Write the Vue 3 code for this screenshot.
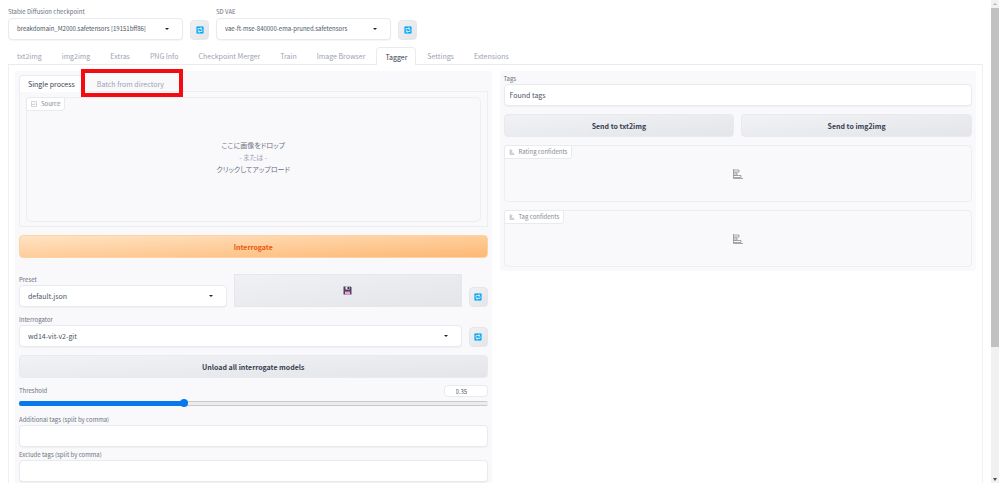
<script setup>
import { ref } from 'vue'

const mainTabs = ['txt2img', 'img2img', 'Extras', 'PNG Info', 'Checkpoint Merger', 'Train', 'Image Browser', 'Tagger', 'Settings', 'Extensions']
const activeTab = ref('Tagger')
const inputTab = ref('single')
const threshold = ref(0.35)
const plots = ['Rating confidents', 'Tag confidents']
</script>

<template>
  <div class="page">
    <main class="content">
      <header class="quick">
        <div class="field quick-field">
          <label for="checkpoint">Stable Diffusion checkpoint</label>
          <div class="select">
            <select id="checkpoint"><option>breakdomain_M2000.safetensors [19151bff86]</option></select>
            <svg class="caret" viewBox="0 0 4 2"><path d="M0 0h4L2 2z" /></svg>
          </div>
        </div>
        <button class="refresh" aria-label="Refresh checkpoints">
          <svg viewBox="0 0 16 16"><rect width="16" height="16" rx="2" fill="#12a5ee" /><path d="M4 9V5h7M9 3l3 2-3 2M12 7v4H5M7 9l-3 2 3 2" /></svg>
        </button>
        <div class="field quick-field">
          <label for="vae">SD VAE</label>
          <div class="select">
            <select id="vae"><option>vae-ft-mse-840000-ema-pruned.safetensors</option></select>
            <svg class="caret" viewBox="0 0 4 2"><path d="M0 0h4L2 2z" /></svg>
          </div>
        </div>
        <button class="refresh" aria-label="Refresh VAE">
          <svg viewBox="0 0 16 16"><rect width="16" height="16" rx="2" fill="#12a5ee" /><path d="M4 9V5h7M9 3l3 2-3 2M12 7v4H5M7 9l-3 2 3 2" /></svg>
        </button>
      </header>

      <nav class="tabs">
        <button v-for="t in mainTabs" :key="t" class="tab" :class="{ active: t === activeTab }" @click="activeTab = t">{{ t }}</button>
      </nav>

      <div class="workspace">
        <section class="panel">
          <div class="input-block">
            <div class="tabs">
              <button class="tab" :class="{ active: inputTab === 'single' }" @click="inputTab = 'single'">Single process</button>
              <button class="tab marked" :class="{ active: inputTab === 'batch' }" @click="inputTab = 'batch'">Batch from directory<span class="mark"></span></button>
            </div>
            <div class="tab-body">
              <div class="drop">
                <span class="tag source">
                  <svg viewBox="0 0 12 12"><path d="M1 1h10v10H1zM1 9l3-3 2 2 2-3 3 3M4 3v1" /></svg>
                  Source
                </span>
                <button class="drop-text">
                  <span>ここに画像をドロップ</span>
                  <span class="or">- または -</span>
                  <span>クリックしてアップロード</span>
                </button>
              </div>
            </div>
          </div>

          <button class="btn primary">Interrogate</button>

          <div class="row preset-row">
            <div class="field preset">
              <label for="preset">Preset</label>
              <div class="select">
                <select id="preset"><option>default.json</option></select>
                <svg class="caret" viewBox="0 0 4 2"><path d="M0 0h4L2 2z" /></svg>
              </div>
            </div>
            <button class="save" aria-label="Save preset">
              <svg viewBox="0 0 18 18"><path d="M1 1h14l2 2v14H1z" fill="#51435d" /><path d="M5 1h8v6H5z" fill="#e9e5f1" /><path d="M9 2h3v4H9z" fill="#3b3149" /><path d="M4 10h10v7H4z" fill="#e8a5d8" /><path d="M4 10h10v2H4z" fill="#a85a9b" /></svg>
            </button>
            <button class="refresh" aria-label="Refresh presets">
              <svg viewBox="0 0 16 16"><rect width="16" height="16" rx="2" fill="#12a5ee" /><path d="M4 9V5h7M9 3l3 2-3 2M12 7v4H5M7 9l-3 2 3 2" /></svg>
            </button>
          </div>

          <div class="row">
            <div class="field grow">
              <label for="interrogator">Interrogator</label>
              <div class="select">
                <select id="interrogator"><option>wd14-vit-v2-git</option></select>
                <svg class="caret" viewBox="0 0 4 2"><path d="M0 0h4L2 2z" /></svg>
              </div>
            </div>
            <button class="refresh" aria-label="Refresh interrogators">
              <svg viewBox="0 0 16 16"><rect width="16" height="16" rx="2" fill="#12a5ee" /><path d="M4 9V5h7M9 3l3 2-3 2M12 7v4H5M7 9l-3 2 3 2" /></svg>
            </button>
          </div>

          <button class="btn">Unload all interrogate models</button>

          <div class="threshold">
            <div class="threshold-head">
              <label for="threshold">Threshold</label>
              <input v-model.number="threshold" class="num" type="number" min="0" max="1" step="0.01" aria-label="Threshold value">
            </div>
            <input id="threshold" v-model.number="threshold" class="range" type="range" min="0" max="1" step="0.01" :style="{ '--fill': threshold * 100 + '%' }">
          </div>

          <div class="extras">
            <div class="field">
              <label for="additional">Additional tags (split by comma)</label>
              <input id="additional" class="box" type="text">
            </div>
            <div class="field">
              <label for="exclude">Exclude tags (split by comma)</label>
              <input id="exclude" class="box" type="text">
            </div>
          </div>
        </section>

        <section class="panel results">
          <div class="field">
            <label for="tags">Tags</label>
            <input id="tags" class="box" type="text" placeholder="Found tags">
          </div>
          <div class="row">
            <button class="btn grow">Send to txt2img</button>
            <button class="btn grow">Send to img2img</button>
          </div>
          <div v-for="p in plots" :key="p" class="plot">
            <span class="tag">
              <svg viewBox="0 0 12 12"><path d="M2 1v10h9M2 2h4v2H2M2 5h3v2H2M2 8h7v2H2" /></svg>
              {{ p }}
            </span>
            <svg class="chart" viewBox="0 0 20 20"><path d="M1 0v19h19M1 2h11v4H1M1 8h7v4H1M1 13h15v4H1" /></svg>
          </div>
        </section>
      </div>
    </main>
    <div class="rail">
      <svg viewBox="0 0 8 8"><path d="M2 5h4L4 3z" fill="#b5b5b5" /></svg>
      <div class="thumb"></div>
      <div class="track"></div>
      <svg viewBox="0 0 8 8"><path d="M2 3h4L4 6z" fill="#505050" /></svg>
    </div>
  </div>
</template>

<style>
body { margin: 0; background: #fff; }
</style>

<style scoped>
* { box-sizing: border-box; }
.page {
  display: flex;
  height: 100vh;
  overflow: hidden;
  font-family: "Noto Sans CJK JP", "Noto Sans", sans-serif;
  font-size: 7px;
  line-height: 10px;
  color: #4b5563;
}
button, input, select { font: inherit; color: inherit; margin: 0; }
button { padding: 0; border: 0; background: none; cursor: pointer; }
svg { display: block; }
.content { flex: 1; min-width: 0; padding: 7px 8px 0; overflow: hidden; }

.quick { display: flex; align-items: flex-end; gap: 7px; }
.quick-field { flex: 0 1 175px; gap: 1px; }
.field { display: flex; flex-direction: column; min-width: 0; }
label { font-size: 6px; line-height: 10px; color: #6b7280; white-space: nowrap; }
.select { display: grid; align-items: center; }
select, .box {
  width: 100%;
  height: 22px;
  border: 1px solid #e8eaee;
  border-radius: 4px;
  background: #fff;
  box-shadow: 0 1px 1px #0000000a;
}
select { grid-area: 1 / 1; appearance: none; padding: 0 20px 0 8px; }
.quick select { font-size: 6px; }
.caret { grid-area: 1 / 1; justify-self: end; width: 4px; height: 2px; margin-right: 14px; fill: #222; pointer-events: none; }
.box { padding: 0 5px; }
.box::placeholder { color: #4b5563; opacity: 1; }
.refresh {
  display: grid;
  place-items: center;
  flex: none;
  width: 19px;
  height: 20px;
  border: 1px solid #e5e7eb;
  border-radius: 4px;
  background: linear-gradient(135deg, #f0f1f4, #e3e5e9);
}
.refresh svg { width: 8px; height: 8px; fill: none; stroke: #fff; stroke-width: 1.4; }

.tabs { display: flex; gap: 2px; }
.content > .tabs { margin-top: 7px; border-bottom: 1px solid #e9ebee; }
.tab {
  height: 17px;
  padding: 0 8px;
  border: 1px solid transparent;
  border-bottom: 0;
  border-radius: 4px 4px 0 0;
  line-height: 16px;
  color: #9ca3af;
  white-space: nowrap;
}
.tab.active { margin-bottom: -1px; height: 18px; border-color: #e9ebee; background: #fff; color: #374151; }

.workspace {
  display: grid;
  grid-template-columns: 1fr 1fr;
  align-items: start;
  gap: 8px;
  padding: 6px;
  border: 1px solid #eff0f2;
  border-top: 0;
}
.panel { display: flex; flex-direction: column; gap: 8px; min-width: 0; padding: 4px; background: #f9f9fc; border-radius: 3px; }
.results { padding-top: 3px; }
.input-block .tabs { gap: 4px; }
.input-block .tab { height: 16px; line-height: 14px; }
.input-block .tab.active { height: 17px; }
.tab-body { padding: 5px 6px 4px; border: 1px solid #eceef1; }
.marked { position: relative; }
.mark { position: absolute; inset: -7px -11px -6px -8px; border: 4px solid #f30b10; pointer-events: none; }
.drop {
  display: flex;
  flex-direction: column;
  height: 125px;
  border: 1px solid #eceef2;
  border-radius: 5px;
}
.tag {
  display: inline-flex;
  align-items: center;
  align-self: flex-start;
  gap: 4px;
  height: 14px;
  padding: 0 4px;
  border: 1px solid #e8eaee;
  border-radius: 3px 0 3px 0;
  background: #fff;
  font-size: 6px;
  color: #858b96;
}
.source { margin: -1px; }
.tag svg { width: 6px; height: 6px; fill: none; stroke: #a9aeb7; stroke-width: 1; }
.drop-text {
  display: flex;
  flex: 1;
  flex-direction: column;
  align-items: center;
  padding-top: 29px;
  line-height: 12px;
  font-feature-settings: "palt";
  color: #6b7280;
}
.or { color: #9ca3af; }

.btn {
  height: 23px;
  border: 1px solid #e8eaed;
  border-radius: 4px;
  background: linear-gradient(to bottom right, #f1f2f5, #e3e5e9);
  font-weight: 600;
  line-height: 20px;
  color: #374151;
}
.primary { border-color: #fed3a3; background: linear-gradient(to bottom right, #ffe3c4, #fdb873); color: #ea580c; }
.row { display: flex; align-items: flex-end; gap: 7px; }
.preset-row { margin-top: 8px; }
.grow { flex: 1; }
.preset { flex: 209 1 0; }
.save {
  display: grid;
  place-items: center;
  flex: 227 1 0;
  height: 33px;
  border: 1px solid #e5e7eb;
  background: linear-gradient(to bottom right, #f0f1f4, #e3e5e9);
}
.save svg { width: 9px; height: 9px; }

.threshold-head { display: flex; align-items: center; justify-content: space-between; height: 12px; }
.num {
  width: 44px;
  height: 12px;
  padding: 0 11px;
  border: 1px solid #e8eaee;
  border-radius: 4px;
  background: #fff;
  font-size: 6px;
  appearance: textfield;
}
.num::-webkit-inner-spin-button { display: none; }
.threshold { margin-top: -1px; }
.range {
  display: block;
  width: 100%;
  height: 8px;
  margin-top: 2px;
  appearance: none;
  background: none;
}
.range::-webkit-slider-runnable-track {
  height: 5px;
  border-radius: 2px;
  background: linear-gradient(to right, #0878ee var(--fill), transparent var(--fill)), linear-gradient(#c9cacc 1px, #ececec 1px, #ececec 4px, #c9cacc 4px);
}
.range::-webkit-slider-thumb { appearance: none; width: 8px; height: 8px; margin-top: -2px; border-radius: 50%; background: #0878ee; }
.extras { display: flex; flex-direction: column; gap: 3px; }

.plot { display: grid; height: 57px; border: 1px solid #eceef1; border-radius: 4px; }
.plot .tag { grid-area: 1 / 1; justify-self: start; margin: -1px; }
.chart { grid-area: 1 / 1; place-self: center; width: 10px; height: 10px; fill: none; stroke: #858b96; stroke-width: 1.5; }

.rail { display: flex; flex-direction: column; flex: 0 0 8px; margin-right: 1px; background: #f1f1f1; }
.rail svg { width: 8px; height: 8px; }
.thumb { flex: 339 1 0; background: #c1c1c1; }
.track { flex: 128 1 0; }
</style>
